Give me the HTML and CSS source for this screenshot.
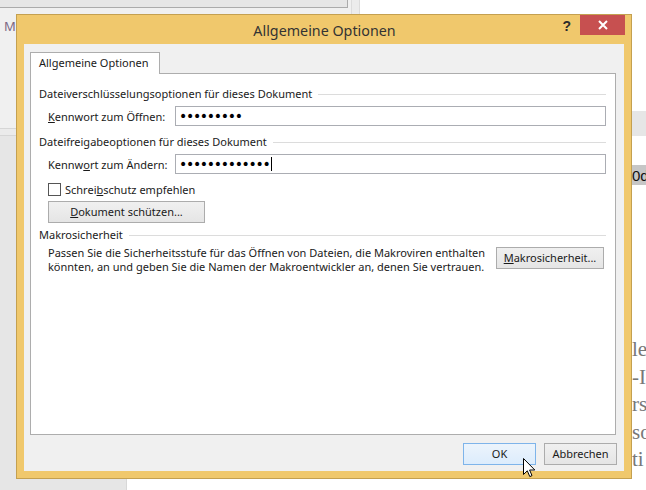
FILE: index.html
```html
<!DOCTYPE html>
<html lang="de">
<head>
<meta charset="utf-8">
<title>Allgemeine Optionen</title>
<link rel="stylesheet" href="styles.css">
</head>
<body>
<div class="screen">
  <div class="topbar">
    <div class="top-left"><div class="tabstrip"></div></div>
    <div class="vstrip"></div>
    <div class="top-right"></div>
  </div>
  <div class="main">
    <aside class="side">
      <div class="side-top"><span class="side-m">M</span></div>
      <div class="side-sep"></div>
      <div class="side-bottom"></div>
    </aside>
    <div class="doc">
      <div class="doc-bar"></div>
      <div class="doc-head"><span class="hl">0d</span></div>
      <div class="doc-text">
        <p>le</p>
        <p>-I</p>
        <p>rs</p>
        <p>so</p>
        <p>ti</p>
      </div>
    </div>
  </div>

  <div class="dialog">
    <div class="titlebar">
      <span></span>
      <span class="title">Allgemeine Optionen</span>
      <div class="controls">
        <span class="help">?</span>
        <span class="close">
          <svg width="10" height="10" viewBox="0 0 10 10"><path d="M1 1 L9 9 M9 1 L1 9" stroke="#fff" stroke-width="2" fill="none"/></svg>
        </span>
      </div>
    </div>
    <div class="client">
      <div class="tabs"><div class="tab">Allgemeine Optionen</div></div>
      <div class="panel">
        <div class="group-label"><span>Dateiverschlüsselungsoptionen für dieses Dokument</span><i class="rule"></i></div>
        <div class="field-row">
          <span class="field-label"><u>K</u>ennwort zum Öffnen:</span>
          <div class="input"><span class="dots">•••••••••</span></div>
        </div>
        <div class="group-label g2"><span>Dateifreigabeoptionen für dieses Dokument</span><i class="rule"></i></div>
        <div class="field-row">
          <span class="field-label">Kennw<u>o</u>rt zum Ändern:</span>
          <div class="input"><span class="dots">•••••••••••••</span><span class="caret"></span></div>
        </div>
        <div class="check-row">
          <span class="checkbox"></span>
          <span>Schrei<u>b</u>schutz empfehlen</span>
        </div>
        <div class="protect-row"><button class="btn protect"><u>D</u>okument schützen...</button></div>
        <div class="group-label g3"><span>Makrosicherheit</span><i class="rule"></i></div>
        <div class="macro-row">
          <p class="macro-text">Passen Sie die Sicherheitsstufe für das Öffnen von Dateien, die Makroviren enthalten<br>könnten, an und geben Sie die Namen der Makroentwickler an, denen Sie vertrauen.</p>
          <button class="btn macro"><u>M</u>akrosicherheit...</button>
        </div>
      </div>
      <div class="actions">
        <button class="btn default">OK</button>
        <button class="btn">Abbrechen</button>
      </div>
    </div>
  </div>

  <svg class="cursor" width="13" height="20" viewBox="0 0 13 20"><path d="M0.5 0.5 L0.5 16.5 L4.3 12.8 L6.8 18.6 L9 17.6 L6.6 12 L11.8 12 Z" fill="#fff" stroke="#000" stroke-width="1" stroke-linejoin="miter"/></svg>
</div>
</body>
</html>
```

FILE: styles.css
```css
* { box-sizing: border-box; }
html, body { margin: 0; padding: 0; }
body {
  width: 646px;
  height: 490px;
  overflow: hidden;
  font-family: "Noto Sans", "Open Sans", sans-serif;
  font-size: 11px;
  color: #1a1a1a;
}
.screen {
  position: relative;
  width: 646px;
  height: 490px;
  overflow: hidden;
  background: #fff;
}

/* background application */
.topbar { display: flex; height: 14px; }
.top-left { width: 351px; flex-shrink: 0; background: #f0f0f0; }
.tabstrip {
  width: 348px;
  height: 8px;
  background: #e6e6e6;
  border-bottom: 1px solid #ababab;
  border-right: 1px solid #ababab;
}
.vstrip {
  width: 9px;
  flex-shrink: 0;
  background: #ececec;
  border-left: 1px solid #dcdcdc;
  border-right: 1px solid #dcdcdc;
}
.top-right { flex: 1; background: #fff; }

.main { display: flex; height: 476px; }
.side {
  width: 127px;
  flex-shrink: 0;
  display: flex;
  flex-direction: column;
  border-right: 1px solid #d8d8d8;
}
.side-top { height: 114px; background: #f0f0f0; padding: 3px 0 0 4px; }
.side-m { font-family: "Noto Sans", sans-serif; font-size: 13px; color: #7c6783; }
.side-sep { height: 8px; background: #ebebeb; border-top: 1px solid #d6d6d6; border-bottom: 1px solid #d6d6d6; }
.side-bottom { flex: 1; background: #e6e6e6; }

.doc { flex: 1; min-width: 0; overflow: hidden; background: #fff; }
.doc-bar { margin-top: 97px; height: 25px; background: #e6e6e6; }
.doc-head { margin-top: 29px; height: 20px; padding-left: 498px; white-space: nowrap; }
.hl {
  display: inline-block;
  height: 20px;
  line-height: 21px;
  padding-left: 7px;
  padding-right: 20px;
  background: #c6c6c6;
  font-family: "Liberation Sans", sans-serif;
  font-size: 15px;
  color: #111;
}
.doc-text { margin-top: 151px; padding-left: 505px; white-space: nowrap; }
.doc-text p {
  margin: 0;
  font-family: "Liberation Serif", serif;
  font-size: 21px;
  line-height: 27.5px;
  color: #787878;
}

/* dialog */
.dialog {
  position: absolute;
  left: 16px;
  top: 14px;
  width: 616px;
  height: 465px;
  border: 1px solid #c4a050;
  background: #f0c86c;
  padding: 0 7px 7px 7px;
  display: flex;
  flex-direction: column;
}
.titlebar {
  height: 29px;
  display: grid;
  grid-template-columns: 1fr auto 1fr;
  margin-right: -1px;
}
.title {
  font-size: 14.3px;
  line-height: 29px;
  color: #333;
  padding-top: 1px;
}
.controls {
  display: flex;
  justify-content: flex-end;
  align-items: flex-start;
  gap: 9px;
}
.help {
  font-family: "Liberation Sans", sans-serif;
  font-weight: bold;
  font-size: 14px;
  line-height: 20px;
  color: #2b2b2b;
  padding-top: 1px;
}
.close {
  width: 45px;
  height: 20px;
  background: #c75050;
  display: flex;
  align-items: center;
  justify-content: center;
}
.client {
  flex: 1;
  background: #f0f0f0;
  padding: 8px 8px 6px 6px;
  display: flex;
  flex-direction: column;
}
.tabs { height: 21px; display: flex; }
.tab {
  position: relative;
  z-index: 1;
  width: 130px;
  height: 22px;
  background: #fff;
  border: 1px solid #adadad;
  border-bottom: none;
  padding-left: 8px;
  line-height: 20px;
  color: #1a1a1a;
}
.panel {
  height: 362px;
  background: #fff;
  border: 1px solid #adadad;
  padding: 12px 9px 0 8px;
  display: flex;
  flex-direction: column;
}
.group-label {
  height: 15px;
  line-height: 15px;
  display: flex;
  align-items: center;
  white-space: nowrap;
}
.group-label .rule {
  flex: 1;
  height: 1px;
  background: #dcdcdc;
  margin-left: 6px;
  margin-top: 1px;
}
.group-label.g2 { margin-top: 8px; }
.group-label.g3 { margin-top: 4px; }
.field-row {
  margin-top: 5px;
  height: 20px;
  display: flex;
  align-items: center;
  padding-left: 9px;
}
.field-label { width: 127px; line-height: 15px; white-space: nowrap; }
.input {
  flex: 1;
  height: 20px;
  border: 1px solid #abadb3;
  background: #fff;
  display: flex;
  align-items: center;
  padding-left: 3px;
}
.dots {
  font-family: "DejaVu Sans", sans-serif;
  font-size: 14px;
  letter-spacing: -1.3px;
  line-height: 18px;
  color: #000;
}
.caret {
  width: 1px;
  height: 14px;
  background: #000;
  margin-left: 2px;
}
.check-row {
  margin-top: 9px;
  height: 13px;
  display: flex;
  align-items: center;
  padding-left: 9px;
  line-height: 15px;
}
.checkbox {
  width: 13px;
  height: 13px;
  border: 1px solid #555;
  background: #fff;
  margin-right: 4px;
}
.protect-row { margin-top: 5px; padding-left: 9px; display: flex; }
.btn {
  font-family: inherit;
  font-size: 11px;
  color: #1a1a1a;
  height: 22px;
  padding: 0;
  border: 1px solid #acacac;
  background: linear-gradient(#f0f0f0, #e5e5e5);
  line-height: 18px;
}
.btn.protect { width: 157px; }
.macro-row {
  margin-top: 4px;
  padding-left: 9px;
  display: flex;
  align-items: flex-start;
  justify-content: space-between;
}
.macro-text {
  margin: 0;
  line-height: 14px;
  white-space: nowrap;
}
.btn.macro { width: 108px; margin-top: 1px; margin-right: 2px; }
.actions {
  margin-top: 8px;
  margin-right: -1px;
  display: flex;
  justify-content: flex-end;
  gap: 8px;
}
.actions .btn { width: 73px; }
.btn.default {
  border-color: #7eb4ea;
  background: linear-gradient(#ecf4fc, #dcecfc);
}

.cursor {
  position: absolute;
  left: 523px;
  top: 458px;
}
```
